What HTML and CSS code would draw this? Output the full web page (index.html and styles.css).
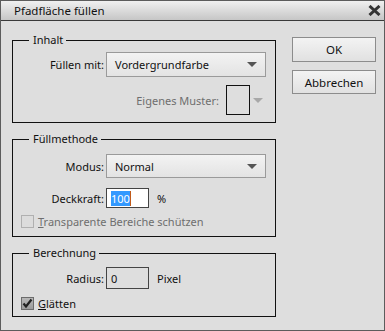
FILE: index.html
```html
<!DOCTYPE html>
<html lang="de">
<head>
    <meta charset="UTF-8">
    <title>Pfadfläche füllen</title>
    <link rel="stylesheet" href="styles.css">
</head>
<body>

    <div class="dialog">
        <!-- Title bar -->
        <div class="titlebar">
            <span class="title">Pfadfläche füllen</span>
            <svg class="close" width="13" height="11" viewBox="0 0 13 11">
                <path d="M1.5 1 L11.5 10 M11.5 1 L1.5 10" stroke="#333" stroke-width="3"/>
            </svg>
        </div>

        <div class="content">
            <div class="groups">

                <!-- Inhalt -->
                <fieldset class="group group-inhalt">
                    <legend>Inhalt</legend>
                    <div class="row row-fill">
                        <label class="row-label">Füllen mit:</label>
                        <div class="select">
                            <span>Vordergrundfarbe</span>
                            <span class="arrow"></span>
                        </div>
                    </div>
                    <div class="row row-pattern">
                        <label class="row-label disabled">Eigenes Muster:</label>
                        <div class="swatch"></div>
                        <span class="arrow arrow-disabled"></span>
                    </div>
                </fieldset>

                <!-- Füllmethode -->
                <fieldset class="group group-mode">
                    <legend>Füllmethode</legend>
                    <div class="row row-mode">
                        <label class="row-label">Modus:</label>
                        <div class="select select-mode">
                            <span>Normal</span>
                            <span class="arrow"></span>
                        </div>
                    </div>
                    <div class="row row-opacity">
                        <label class="row-label">Deckkraft:</label>
                        <div class="field field-opacity"><span class="selected">100</span><span class="caret"></span></div>
                        <span class="unit">%</span>
                    </div>
                    <div class="check check-transparent disabled">
                        <span class="box"></span>
                        <span><u>T</u>ransparente Bereiche schützen</span>
                    </div>
                </fieldset>

                <!-- Berechnung -->
                <fieldset class="group group-calc">
                    <legend>Berechnung</legend>
                    <div class="row row-radius">
                        <label class="row-label">Radius:</label>
                        <div class="field field-radius">0</div>
                        <span class="unit">Pixel</span>
                    </div>
                    <div class="check check-smooth">
                        <span class="box box-checked">
                            <svg width="11" height="11" viewBox="0 0 11 11">
                                <path d="M1.5 5.5 L4 8.5 L9.5 1.5" fill="none" stroke="#222" stroke-width="2.2"/>
                            </svg>
                        </span>
                        <span><u>G</u>lätten</span>
                    </div>
                </fieldset>
            </div>

            <!-- Buttons -->
            <div class="buttons">
                <button class="btn btn-ok">OK</button>
                <button class="btn btn-cancel">Abbrechen</button>
            </div>
        </div>
    </div>

</body>
</html>
```

FILE: styles.css
```css
* {
    margin: 0;
    padding: 0;
    box-sizing: border-box;
}

body {
    font-family: 'Noto Sans', sans-serif;
    font-size: 11px;
    color: #111;
    background: #dedede;
}

.dialog {
    width: 385px;
    height: 331px;
    border: 1px solid #5c5c5c;
    background: #dedede;
}

.titlebar {
    height: 20px;
    display: flex;
    align-items: center;
    justify-content: space-between;
    padding: 0 3px 0 13px;
    background: linear-gradient(#f0f0f0, #c6c6c6);
    border-bottom: 1px solid #3a3a3a;
}

.title {
    font-size: 11.5px;
    line-height: 16px;
}

.content {
    display: flex;
    padding: 11px 8px 0 11px;
}

.groups {
    width: 264px;
}

.group {
    border: 1px solid #111;
    padding: 0;
    margin: 0 0 8px 0;
}

.group legend {
    margin-left: 16px;
    padding: 0 3px 0 4px;
    line-height: 16px;
}

.row {
    display: flex;
    align-items: center;
}

.row-label {
    width: 93px;
    text-align: right;
    padding-right: 2px;
}

.disabled {
    color: #6e6e6e;
}

.select {
    width: 160px;
    height: 25px;
    display: flex;
    align-items: center;
    justify-content: space-between;
    padding: 0 8px 0 8px;
    border: 1px solid #9a9a9a;
    background: linear-gradient(#f3f3f3, #e3e3e3);
}

.select-mode {
    height: 24px;
}

.arrow {
    width: 0;
    height: 0;
    border-left: 5px solid transparent;
    border-right: 5px solid transparent;
    border-top: 5px solid #555;
}

.arrow-disabled {
    border-top-color: #a8a8a8;
    margin-left: 3px;
}

.row-fill {
    margin-top: 4px;
}

.row-pattern {
    justify-content: flex-end;
    margin-top: 8px;
    padding-right: 12px;
}

.row-pattern .row-label {
    width: auto;
    padding-right: 7px;
}

.swatch {
    width: 24px;
    height: 30px;
    border: 1px solid #111;
}

.group-inhalt {
    padding-bottom: 7px;
}

.row-mode {
    margin-top: 7px;
}

.row-opacity {
    margin-top: 10px;
}

.field {
    width: 43px;
    border: 1px solid #444;
    display: flex;
    align-items: center;
    padding-left: 4px;
}

.field-opacity {
    height: 20px;
    background: #fff;
}

.field-radius {
    height: 22px;
    padding-left: 4px;
}

.selected {
    background: #3399ff;
    color: #fff;
    line-height: 15px;
}

.caret {
    width: 1px;
    height: 15px;
    background: #c05a1a;
}

.unit {
    margin-left: 8px;
}

.check {
    display: flex;
    align-items: center;
    gap: 4px;
    padding-left: 8px;
    line-height: 13px;
}

.check-transparent {
    margin-top: 7px;
}

.group-mode {
    padding-bottom: 8px;
    margin-bottom: 8px;
}

.box {
    width: 13px;
    height: 13px;
    border: 1px solid #b0b0b0;
    background: #dcdcdc;
    display: flex;
    align-items: center;
    justify-content: center;
}

.box-checked {
    border-color: #6c6c6c;
    background: linear-gradient(#b8b8b8, #9c9c9c);
}

.row-radius {
    margin-top: 6px;
}

.check-smooth {
    margin-top: 8px;
}

.group-calc {
    padding-bottom: 6px;
}

.buttons {
    display: flex;
    flex-direction: column;
    gap: 8px;
    margin-left: 16px;
    margin-top: 5px;
}

.btn {
    width: 84px;
    height: 25px;
    font-family: inherit;
    font-size: 11.5px;
    color: #111;
    border: 1px solid #8c8c8c;
    background: linear-gradient(#f3f3f3, #e1e1e1);
}

.btn-cancel {
    height: 24px;
}
```
